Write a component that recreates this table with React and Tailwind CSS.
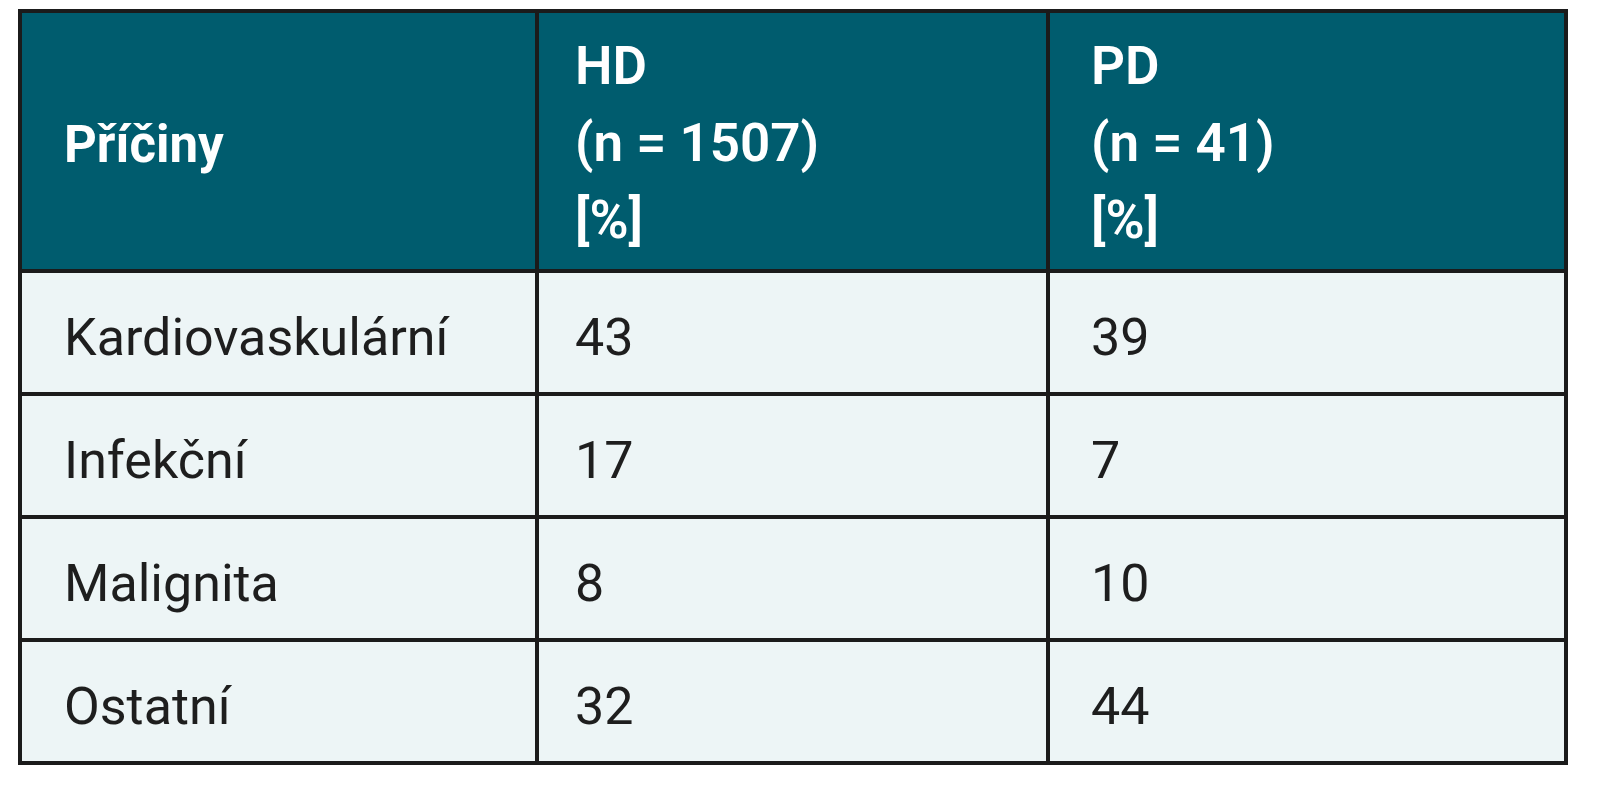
const rows = [
  ["Kardiovaskulární", "43", "39"],
  ["Infekční", "17", "7"],
  ["Malignita", "8", "10"],
  ["Ostatní", "32", "44"],
];

const App = () => {
  return (
    <div className="min-h-[800px] bg-white pt-[9px] pl-[18px] font-['Roboto',sans-serif]">
      <div className="grid w-fit grid-cols-[513px_507px_514px] gap-[4px] bg-[#1b1b1b] p-[4px]">
        {/* header */}
        <div className="flex h-[256px] items-center bg-[#005c6e] pl-[42px] pt-[8px] text-[51px] font-bold text-white">
          Příčiny
        </div>
        <div className="flex h-[256px] flex-col justify-center bg-[#005c6e] pl-[36px] pt-[4px] text-[53px] font-semibold leading-[77px] text-white">
          <span>HD</span>
          <span>(n = 1507)</span>
          <span>[%]</span>
        </div>
        <div className="flex h-[256px] flex-col justify-center bg-[#005c6e] pl-[41px] pt-[4px] text-[53px] font-semibold leading-[77px] text-white">
          <span>PD</span>
          <span>(n = 41)</span>
          <span>[%]</span>
        </div>

        {/* body */}
        {rows.map((row) => (
          <>
            <div
              key={row[0]}
              className="flex h-[119px] items-center bg-[#edf5f6] pl-[42px] pt-[10px] text-[52px] text-[#1e1e1e]"
            >
              {row[0]}
            </div>
            <div className="flex h-[119px] items-center bg-[#edf5f6] pl-[36px] pt-[10px] text-[52px] text-[#1e1e1e]">
              {row[1]}
            </div>
            <div className="flex h-[119px] items-center bg-[#edf5f6] pl-[41px] pt-[10px] text-[52px] text-[#1e1e1e]">
              {row[2]}
            </div>
          </>
        ))}
      </div>
    </div>
  );
};

export default App;
